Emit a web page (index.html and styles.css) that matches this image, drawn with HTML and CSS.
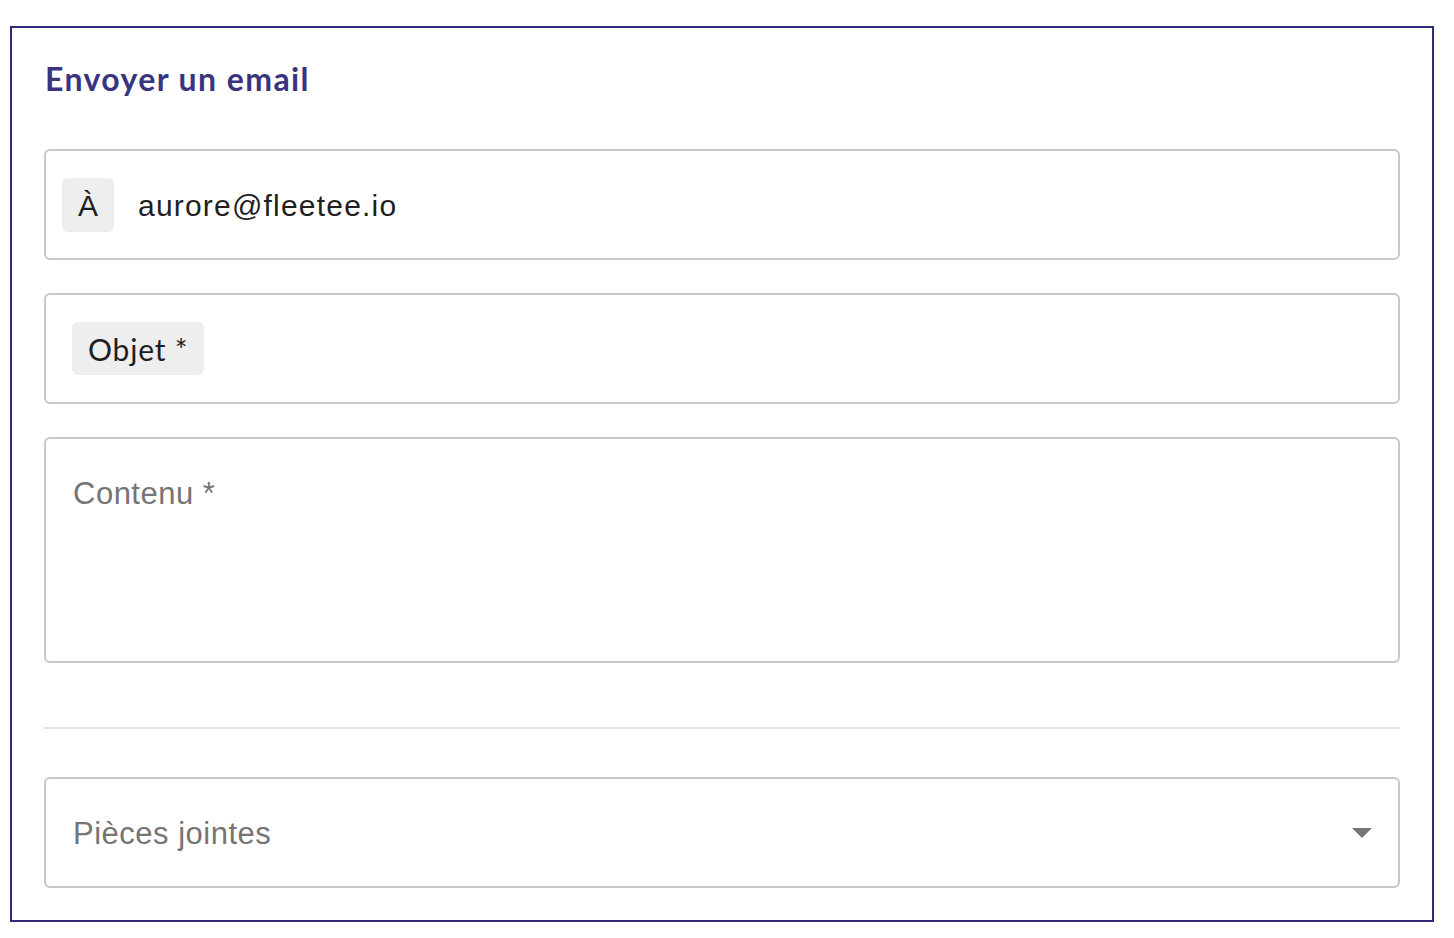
FILE: index.html
```html
<!DOCTYPE html>
<html lang="fr">
<head>
<meta charset="utf-8">
<title>Envoyer un email</title>
<link rel="stylesheet" href="styles.css">
</head>
<body>
<section class="card">
  <h2 class="title">Envoyer un email</h2>
  <div class="field field-to">
    <span class="chip chip-to">À</span>
    <span class="value">aurore@fleetee.io</span>
  </div>
  <div class="field field-subject">
    <span class="chip chip-subject">Objet *</span>
  </div>
  <div class="field field-content">
    <span class="placeholder">Contenu *</span>
  </div>
  <hr class="divider">
  <div class="field field-select">
    <span class="placeholder">Pièces jointes</span>
    <svg class="arrow" width="20" height="10" viewBox="0 0 20 10"><path d="M0 0 L20 0 L10 10 Z" fill="#757575"/></svg>
  </div>
</section>
</body>
</html>
```
FILE: styles.css
```css
html, body {
  margin: 0;
  padding: 0;
  background: #ffffff;
}
body {
  padding: 26px 20px 16px 10px;
}
.card {
  box-sizing: border-box;
  width: 1424px;
  height: 896px;
  border: 2px solid #2f2a78;
  padding: 33px 32px 32px 32px;
  display: flex;
  flex-direction: column;
}
.title {
  margin: 0 0 52px 1px;
  font-family: Lato, "Noto Sans", sans-serif;
  font-weight: 700;
  font-size: 32px;
  line-height: 36px;
  color: #3a347f;
  letter-spacing: 1.4px;
}
.field {
  box-sizing: border-box;
  width: 1356px;
  height: 111px;
  border: 2px solid #c8c8c8;
  border-radius: 6px;
  display: flex;
  align-items: center;
  flex-shrink: 0;
}
.field + .field {
  margin-top: 33px;
}
.field-to {
  padding-left: 16px;
}
.chip {
  box-sizing: border-box;
  background: #eeeeee;
  border-radius: 6px;
  display: inline-flex;
  align-items: center;
  justify-content: center;
  color: #1f1f1f;
}
.chip-to {
  width: 52px;
  height: 54px;
  font-family: "Liberation Sans", Arial, sans-serif;
  font-size: 30px;
  padding-top: 2px;
}
.value {
  margin-left: 24px;
  padding-top: 3px;
  font-family: "Liberation Sans", Arial, sans-serif;
  font-size: 30px;
  letter-spacing: 1.2px;
  color: #1f1f1f;
}
.field-subject {
  padding-left: 26px;
}
.chip-subject {
  height: 53px;
  padding: 0 16px;
  font-family: Lato, "Noto Sans", sans-serif;
  font-size: 30px;
  letter-spacing: 0.8px;
}
.field-content {
  height: 226px;
  align-items: flex-start;
  padding: 37px 27px 0;
}
.placeholder {
  font-family: "Liberation Sans", Arial, sans-serif;
  font-size: 31px;
  line-height: normal;
  color: #757575;
  letter-spacing: 0.5px;
}
.divider {
  width: 1356px;
  margin: 64px 0 48px;
  border: 0;
  border-top: 2px solid #e2e2e2;
  height: 0;
}
.field-select {
  padding: 2px 26px 0 27px;
  justify-content: space-between;
}
.arrow {
  display: block;
  margin-top: -1px;
}
```
